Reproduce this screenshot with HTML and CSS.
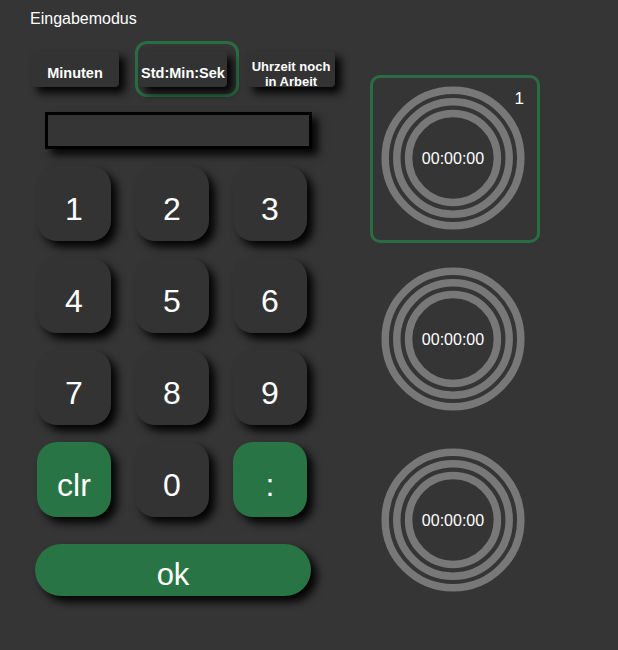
FILE: index.html
```html
<!DOCTYPE html>
<html lang="de">
<head>
<meta charset="utf-8">
<title>Eingabemodus</title>
<link rel="stylesheet" href="styles.css">
</head>
<body>
<div class="app">
  <div class="title">Eingabemodus</div>
  <div class="main">
    <div class="left">
      <div class="modes">
        <div class="mode-wrap"><button class="mode">Minuten</button></div>
        <div class="mode-wrap selected"><button class="mode">Std:Min:Sek</button></div>
        <div class="mode-wrap"><button class="mode two">Uhrzeit noch<br>in Arbeit</button></div>
      </div>
      <div class="display"></div>
      <div class="keypad">
        <button class="key">1</button>
        <button class="key">2</button>
        <button class="key">3</button>
        <button class="key">4</button>
        <button class="key">5</button>
        <button class="key">6</button>
        <button class="key">7</button>
        <button class="key">8</button>
        <button class="key">9</button>
        <button class="key green">clr</button>
        <button class="key">0</button>
        <button class="key green">:</button>
      </div>
      <button class="ok">ok</button>
    </div>
    <div class="right">
      <div class="timer active">
        <span class="num">1</span>
        <svg class="rings" width="150" height="150" viewBox="0 0 150 150">
          <circle cx="75" cy="75" r="67.8" />
          <circle cx="75" cy="75" r="56.2" />
          <circle cx="75" cy="75" r="44.4" />
        </svg>
        <span class="time">00:00:00</span>
      </div>
      <div class="timer">
        <svg class="rings" width="150" height="150" viewBox="0 0 150 150">
          <circle cx="75" cy="75" r="67.8" />
          <circle cx="75" cy="75" r="56.2" />
          <circle cx="75" cy="75" r="44.4" />
        </svg>
        <span class="time">00:00:00</span>
      </div>
      <div class="timer">
        <svg class="rings" width="150" height="150" viewBox="0 0 150 150">
          <circle cx="75" cy="75" r="67.8" />
          <circle cx="75" cy="75" r="56.2" />
          <circle cx="75" cy="75" r="44.4" />
        </svg>
        <span class="time">00:00:00</span>
      </div>
    </div>
  </div>
</div>
</body>
</html>
```

FILE: styles.css
```css
* { box-sizing: border-box; }

html, body {
  margin: 0;
  padding: 0;
  background: #353535;
  font-family: "Liberation Sans", Arial, sans-serif;
  color: #ffffff;
}

.app {
  width: 618px;
  height: 650px;
  background: #353535;
}

.title {
  padding: 10px 0 0 30px;
  font-size: 16px;
  line-height: 18px;
  height: 41px;
}

.main {
  display: flex;
  padding-left: 27px;
}

.left {
  width: 343px;
  display: flex;
  flex-direction: column;
  align-items: flex-start;
}

.modes {
  display: flex;
  gap: 4px;
}

.mode-wrap {
  width: 104px;
  height: 56px;
  border: 3px solid transparent;
  border-radius: 12px;
  padding: 7px 0 0 1px;
}

.mode-wrap.selected {
  border-color: #2a6d43;
}

.mode {
  width: 88px;
  height: 36px;
  border: none;
  border-radius: 4px;
  background: #333333;
  color: #ffffff;
  font-family: "Liberation Sans", Arial, sans-serif;
  font-weight: bold;
  font-size: 14.5px;
  line-height: 16px;
  padding: 8px 0 0 0;
  box-shadow: 6px 6px 8px rgba(0, 0, 0, 0.95);
}

.mode.two {
  font-size: 13px;
  line-height: 15px;
  padding: 8px 0 0 0;
}

.display {
  margin: 15px 0 0 18px;
  width: 267px;
  height: 37px;
  border: 3px solid #000000;
  box-shadow: 6px 6px 8px rgba(0, 0, 0, 0.9);
}

.keypad {
  margin: 17px 0 0 10px;
  display: grid;
  grid-template-columns: repeat(3, 74px);
  grid-auto-rows: 75px;
  column-gap: 24px;
  row-gap: 17px;
}

.key {
  border: none;
  border-radius: 20px;
  background: #333333;
  color: #ffffff;
  font-family: "Liberation Sans", Arial, sans-serif;
  font-size: 32px;
  padding: 11px 0 0 0;
  box-shadow: 6px 6px 8px rgba(0, 0, 0, 0.95);
}

.key.green {
  background: #287444;
}

.ok {
  margin: 27px 0 0 8px;
  width: 276px;
  height: 52px;
  border: none;
  border-radius: 26px;
  background: #287444;
  color: #ffffff;
  font-family: "Liberation Sans", Arial, sans-serif;
  font-size: 31px;
  padding: 9px 0 0 0;
  box-shadow: 6px 6px 8px rgba(0, 0, 0, 0.95);
}

.right {
  margin-top: 34px;
  display: flex;
  flex-direction: column;
  gap: 13px;
}

.timer {
  position: relative;
  width: 170px;
  height: 168px;
  border: 3px solid transparent;
  border-radius: 10px;
  display: flex;
  align-items: center;
  justify-content: center;
}

.timer.active {
  border-color: #2a6d43;
}

.rings {
  position: absolute;
  left: 5px;
  top: 5px;
}

.rings circle {
  fill: none;
  stroke: #777877;
  stroke-width: 7.5;
}

.time {
  position: relative;
  font-size: 16px;
  margin-left: -4px;
  margin-top: -1px;
}

.num {
  position: absolute;
  top: 11px;
  right: 13px;
  font-size: 17px;
  line-height: 20px;
}
```
